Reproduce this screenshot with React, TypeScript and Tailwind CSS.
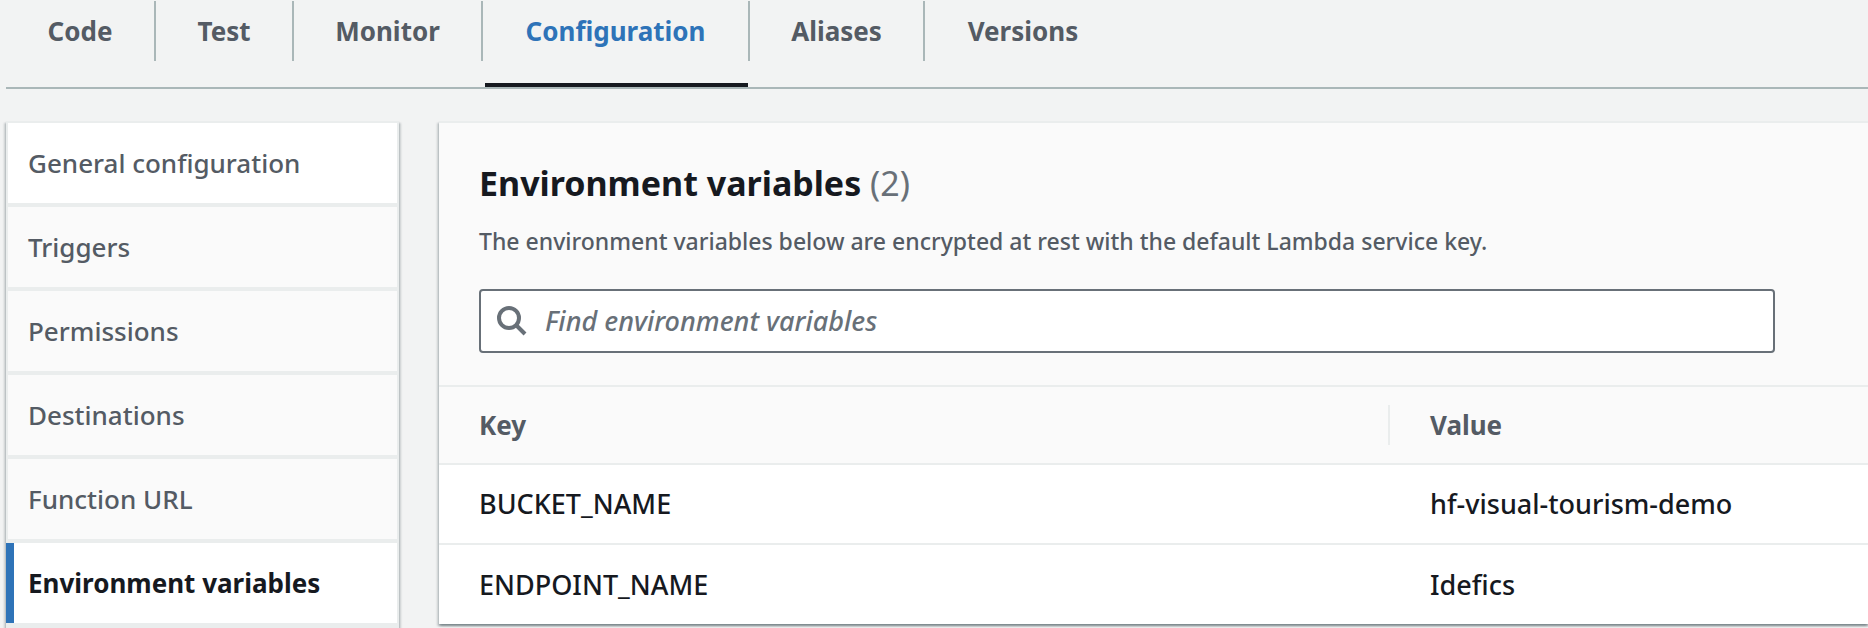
import { useState } from "react";

const tabs = [
  { label: "Code", width: "w-[150px]" },
  { label: "Test", width: "w-[138px]" },
  { label: "Monitor", width: "w-[189px]" },
  { label: "Configuration", width: "w-[267px]" },
  { label: "Aliases", width: "w-[175px]" },
  { label: "Versions", width: "w-[196px]" },
];

const sections = [
  "General configuration",
  "Triggers",
  "Permissions",
  "Destinations",
  "Function URL",
  "Environment variables",
];

const variables = [
  { key: "BUCKET_NAME", value: "hf-visual-tourism-demo" },
  { key: "ENDPOINT_NAME", value: "Idefics" },
];

const panelShadow =
  "shadow-[0_2px_2px_0_rgba(0,28,36,0.3),2px_2px_2px_0_rgba(0,28,36,0.15),-2px_2px_2px_0_rgba(0,28,36,0.15)]";

function SearchIcon() {
  return (
    <svg viewBox="0 0 30 30" className="h-[30px] w-[30px] shrink-0" fill="none" stroke="#687078" strokeWidth="4" aria-hidden="true">
      <circle cx="12" cy="12" r="10" />
      <path d="M19 19l9 9" />
    </svg>
  );
}

function TabBar() {
  return (
    <nav className="ml-1.5 flex border-b-2 border-[#aab7b8] pt-px">
      {tabs.map((tab, i) => {
        const active = tab.label === "Configuration";
        const last = i === tabs.length - 1;
        return (
          <a
            key={tab.label}
            href="#"
            aria-current={active ? "page" : undefined}
            className={`flex shrink-0 flex-col justify-between h-[86px] font-bold ${tab.width} ${active ? "text-[#2e73b8]" : "text-[#545b64]"}`}
          >
            <span className={`flex h-[60px] items-center justify-center ${last ? "" : "border-r-2 border-[#aab7b8]"}`}>
              {tab.label}
            </span>
            {active && <span className="mx-0.5 h-1 bg-[#16191f]" />}
          </a>
        );
      })}
    </nav>
  );
}

function SideNav() {
  return (
    <nav className={`w-[393px] shrink-0 border-t-2 border-[#eaeded] bg-[#eaeded] pb-px ${panelShadow}`}>
      <ul>
        {sections.map((name, i) => {
          const active = name === "Environment variables";
          return (
            <li key={name} className="border-b-4 border-[#eaeded]">
              <a
                href="#"
                aria-current={active ? "page" : undefined}
                className={`mr-0.5 flex h-20 items-center ${
                  active
                    ? "border-l-8 border-[#2e73b8] bg-white pl-3.5 font-bold text-[#16191f]"
                    : `ml-0.5 pl-5 font-medium text-[#545b64] ${i === 0 ? "bg-white" : "bg-[#fafafa]"}`
                }`}
              >
                {name}
              </a>
            </li>
          );
        })}
      </ul>
    </nav>
  );
}

function VariablesPanel() {
  const [query, setQuery] = useState("");
  const rows = variables.filter((v) => (v.key + v.value).toLowerCase().includes(query.toLowerCase()));
  return (
    <section className={`min-w-0 flex-1 self-start border-t-2 border-[#eaeded] bg-white ${panelShadow}`}>
      <div className="border-b-2 border-[#eaeded] bg-[#fafafa] pt-9 pr-[93px] pb-8 pl-10">
        <h2 className="text-[34px] leading-[48px] font-bold text-[#16191f]">
          Environment variables <span className="font-normal text-[#687078]">(2)</span>
        </h2>
        <p className="mt-[18px] text-[23px] leading-8 font-medium text-[#545b64]">
          The environment variables below are encrypted at rest with the default Lambda service key.
        </p>
        <label className="mt-8 flex h-16 items-center gap-[18px] rounded-sm border-2 border-[#687078] bg-white px-4">
          <SearchIcon />
          <input
            type="text"
            aria-label="Find environment variables"
            value={query}
            onChange={(e) => setQuery(e.target.value)}
            placeholder="Find environment variables"
            className="min-w-0 flex-1 bg-transparent text-[27px] font-medium outline-none placeholder:text-[#687078] placeholder:italic"
          />
        </label>
      </div>
      <table className="w-full table-fixed border-collapse text-left text-[#16191f]">
        <thead>
          <tr className="bg-[#fafafa] text-[#545b64]">
            <th scope="col" className="w-[951px] p-0 font-bold">
              <div className="flex h-[76px] items-center">
                <div className="flex h-10 w-full items-center border-r-2 border-[#eaeded] pl-10">Key</div>
              </div>
            </th>
            <th scope="col" className="py-0 pl-10 font-bold">Value</th>
          </tr>
        </thead>
        <tbody className="text-[27px] font-medium">
          {rows.map((v) => (
            <tr key={v.key} className="h-20 border-t-2 border-[#eaeded]">
              <td className="py-0 pl-10">{v.key}</td>
              <td className="py-0 pl-10">{v.value}</td>
            </tr>
          ))}
        </tbody>
      </table>
    </section>
  );
}

export default function App() {
  return (
    <div className="h-screen overflow-hidden bg-[#f2f3f3] font-['Noto_Sans',sans-serif] text-[26px] leading-9">
      <TabBar />
      <main className="flex gap-10 pt-8 pl-1.5">
        <SideNav />
        <VariablesPanel />
      </main>
    </div>
  );
}
